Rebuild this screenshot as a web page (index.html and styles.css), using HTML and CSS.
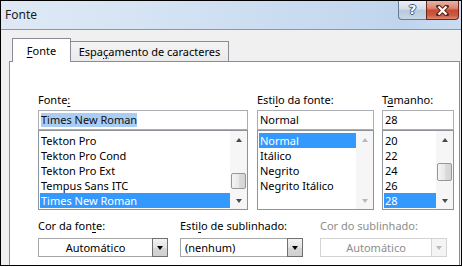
FILE: index.html
```html
<!DOCTYPE html>
<html lang="pt">
<head>
<meta charset="utf-8">
<title>Fonte</title>
<link rel="stylesheet" href="styles.css">
</head>
<body>
<div class="window">
  <div class="titlebar">
    <span class="title">Fonte</span>
    <div class="caption">
      <div class="cap-btn help">?</div>
      <div class="cap-btn close">
        <svg width="13" height="11" viewBox="0 0 13 11"><path d="M2.5 1.5 L10.5 9.5 M10.5 1.5 L2.5 9.5" stroke="#5a2418" stroke-width="4.2" stroke-linecap="square" fill="none"/><path d="M2.5 1.5 L10.5 9.5 M10.5 1.5 L2.5 9.5" stroke="#ffffff" stroke-width="2.2" fill="none"/></svg>
      </div>
    </div>
  </div>
  <div class="client">
    <div class="tabs">
      <div class="tab tab-active"><u>F</u>onte</div>
      <div class="tab tab-other">Espa<u>ç</u>amento de caracteres</div>
    </div>
    <div class="panel">
      <div class="pickers">
        <div class="picker picker-font">
          <div class="lbl">Fonte<u>:</u></div>
          <div class="field"><span class="field-sel">Times New Roman</span></div>
          <div class="list">
            <div class="items">
              <div class="item">Tekton Pro</div>
              <div class="item">Tekton Pro Cond</div>
              <div class="item">Tekton Pro Ext</div>
              <div class="item">Tempus Sans ITC</div>
              <div class="item item-sel">Times New Roman</div>
            </div>
            <div class="sb">
              <div class="sb-btn"><span class="tri tri-up"></span></div>
              <div class="sb-track"><div class="thumb thumb-font"></div></div>
              <div class="sb-btn"><span class="tri tri-down"></span></div>
            </div>
          </div>
        </div>
        <div class="picker picker-style">
          <div class="lbl">Esti<u>l</u>o da fonte:</div>
          <div class="field">Normal</div>
          <div class="list">
            <div class="items">
              <div class="item item-sel">Normal</div>
              <div class="item">Itálico</div>
              <div class="item">Negrito</div>
              <div class="item">Negrito Itálico</div>
            </div>
            <div class="sb">
              <div class="sb-btn"><span class="tri tri-up tri-off"></span></div>
              <div class="sb-track"></div>
              <div class="sb-btn"><span class="tri tri-down tri-off"></span></div>
            </div>
          </div>
        </div>
        <div class="picker picker-size">
          <div class="lbl">T<u>a</u>manho:</div>
          <div class="field">28</div>
          <div class="list">
            <div class="items">
              <div class="item">20</div>
              <div class="item">22</div>
              <div class="item">24</div>
              <div class="item">26</div>
              <div class="item item-sel">28</div>
            </div>
            <div class="sb">
              <div class="sb-btn"><span class="tri tri-up"></span></div>
              <div class="sb-track"><div class="thumb thumb-size"></div></div>
              <div class="sb-btn"><span class="tri tri-down"></span></div>
            </div>
          </div>
        </div>
      </div>
      <div class="combos">
        <div class="group group-color">
          <div class="lbl">Cor da fon<u>t</u>e:</div>
          <div class="combo">
            <div class="combo-field combo-center">Automático</div>
            <div class="combo-btn"><span class="tri tri-down tri-dark"></span></div>
          </div>
        </div>
        <div class="group group-under">
          <div class="lbl">Esti<u>l</u>o de sublinhado:</div>
          <div class="combo">
            <div class="combo-field combo-left">(nenhum)</div>
            <div class="combo-btn"><span class="tri tri-down tri-dark"></span></div>
          </div>
        </div>
        <div class="group group-ucolor">
          <div class="lbl lbl-off">Cor do sublinhado:</div>
          <div class="combo combo-off">
            <div class="combo-field combo-center">Automático</div>
            <div class="combo-btn"><span class="tri tri-down tri-off"></span></div>
          </div>
        </div>
      </div>
    </div>
  </div>
</div>
</body>
</html>
```

FILE: styles.css
```css
* { box-sizing: border-box; }
html, body { margin: 0; padding: 0; }
body {
  background: #fff;
  width: 463px;
  height: 267px;
  overflow: hidden;
  font-family: "Noto Sans", "Open Sans", sans-serif;
  font-size: 11px;
  line-height: 14px;
  color: #000;
}
u { text-underline-offset: 2px; }

.window {
  width: 462px;
  height: 266px;
  border: 1px solid #000;
  background: #f0f0f0;
  display: flex;
  flex-direction: column;
  overflow: hidden;
}

/* title bar */
.titlebar {
  flex: none;
  height: 29px;
  border-bottom: 1px solid #8c97a5;
  display: flex;
  justify-content: space-between;
  align-items: flex-start;
  background: linear-gradient(90deg, #dfe9f5 0%, #d4e3f3 35%, #c9dbf0 65%, #c0d5ed 88%, #cadcf0 100%);
}
.title {
  padding-left: 4px;
  line-height: 28px;
  font-size: 12px;
  color: #1b1b1b;
}
.caption { display: flex; margin-right: 2px; }
.cap-btn {
  height: 19px;
  display: flex;
  align-items: center;
  justify-content: center;
}
.help {
  width: 28px;
  border: 1px solid #6c7b90;
  border-top: none;
  border-right: none;
  border-radius: 0 0 0 4px;
  background: linear-gradient(#eaf0f7, #d3dde9 45%, #bac9db 52%, #c8d6e6 100%);
  color: #fff;
  font-weight: bold;
  font-size: 13px;
  font-family: "DejaVu Sans", sans-serif;
  text-shadow: 1px 0 0 #46566c, -1px 0 0 #46566c, 0 1px 0 #46566c, 0 -1px 0 #46566c;
}
.close {
  width: 33px;
  border: 1px solid #6b2618;
  border-top: none;
  border-radius: 0 0 4px 0;
  background: linear-gradient(#e9b2a4, #da8571 40%, #c64b34 52%, #cc5a42 80%, #dd8a70 100%);
}

/* client area */
.client {
  flex: 1;
  display: flex;
  flex-direction: column;
  padding: 8px 1px 0 8px;
}
.tabs {
  flex: none;
  height: 23px;
  display: flex;
  align-items: flex-end;
  padding-left: 3px;
}
.tab {
  display: flex;
  align-items: center;
  justify-content: center;
  border: 1px solid #898c95;
  border-bottom: none;
  white-space: nowrap;
}
.tab-active {
  width: 59px;
  height: 24px;
  margin-bottom: -1px;
  background: #fff;
  position: relative;
  z-index: 1;
}
.tab-other {
  width: 159px;
  height: 20px;
  margin-left: -1px;
  background: linear-gradient(#f4f4f4, #eaeaea);
}

.panel {
  flex: 1;
  border: 1px solid #898c95;
  border-bottom: none;
  background: #fff;
  padding: 31px 0 0 28px;
}

/* pickers */
.pickers { display: flex; }
.picker { display: flex; flex-direction: column; }
.picker-font { width: 210px; margin-right: 9px; }
.picker-style { width: 117px; margin-right: 8px; }
.picker-size { width: 72px; }

.lbl {
  height: 14px;
  margin-bottom: 3px;
  white-space: nowrap;
}
.lbl-off { color: #8d8d8d; }

.field {
  height: 20px;
  border: 1px solid #abadb3;
  background: #fff;
  padding-left: 2px;
  display: flex;
  align-items: center;
  white-space: nowrap;
}
.field-sel { background: #a9cdf3; color: #111; }

.list {
  height: 80px;
  border: 1px solid #8e9299;
  display: flex;
  background: #fff;
}
.items {
  flex: 1;
  padding: 2px 0 0 1px;
  min-width: 0;
}
.item {
  height: 15px;
  line-height: 15px;
  padding-left: 1px;
  white-space: nowrap;
  overflow: hidden;
}
.item-sel { background: #3399ff; color: #fff; }

/* scrollbars */
.sb {
  width: 17px;
  flex: none;
  display: flex;
  flex-direction: column;
  background: #f6f6f6;
}
.sb-btn {
  height: 17px;
  flex: none;
  display: flex;
  align-items: center;
  justify-content: center;
}
.sb-track { flex: 1; }
.thumb {
  margin: 0 1px;
  border: 1px solid #979797;
  border-radius: 2px;
  background: linear-gradient(90deg, #f4f4f4, #e8e8e8 50%, #dcdcdc 52%, #d4d4d4);
}
.thumb-font { margin-top: 25px; height: 16px; }
.thumb-size { margin-top: 15px; height: 18px; }

.tri {
  width: 0;
  height: 0;
  border-left: 3.5px solid transparent;
  border-right: 3.5px solid transparent;
}
.tri-up { border-bottom: 4px solid #4a4a4a; }
.tri-down { border-top: 4px solid #4a4a4a; }
.tri-up.tri-off { border-bottom-color: #b9b9b9; }
.tri-down.tri-off { border-top-color: #b9b9b9; }
.tri-down.tri-dark { border-top-color: #000; }

/* bottom combos */
.combos { display: flex; margin-top: 9px; }
.group { display: flex; flex-direction: column; }
.group .lbl { margin-bottom: 5px; }
.group-color { width: 130px; margin-right: 12px; }
.group-under { width: 123px; margin-right: 17px; }
.group-ucolor { width: 127px; }

.combo { display: flex; height: 19px; }
.combo-field {
  flex: 1;
  border: 1px solid #a5a5a5;
  border-right: none;
  background: #fff;
  display: flex;
  align-items: center;
  white-space: nowrap;
}
.combo-center { justify-content: center; }
.combo-left { padding-left: 4px; }
.combo-btn {
  width: 16px;
  flex: none;
  border: 1px solid #707070;
  background: linear-gradient(#f3f3f3, #e3e3e3 50%, #d7d7d7 52%, #cfcfcf);
  display: flex;
  align-items: center;
  justify-content: center;
}
.combo-off .combo-field { border-color: #d3d3d3; color: #8d8d8d; }
.combo-off .combo-btn { border-color: #d3d3d3; background: #f4f4f4; }
```
